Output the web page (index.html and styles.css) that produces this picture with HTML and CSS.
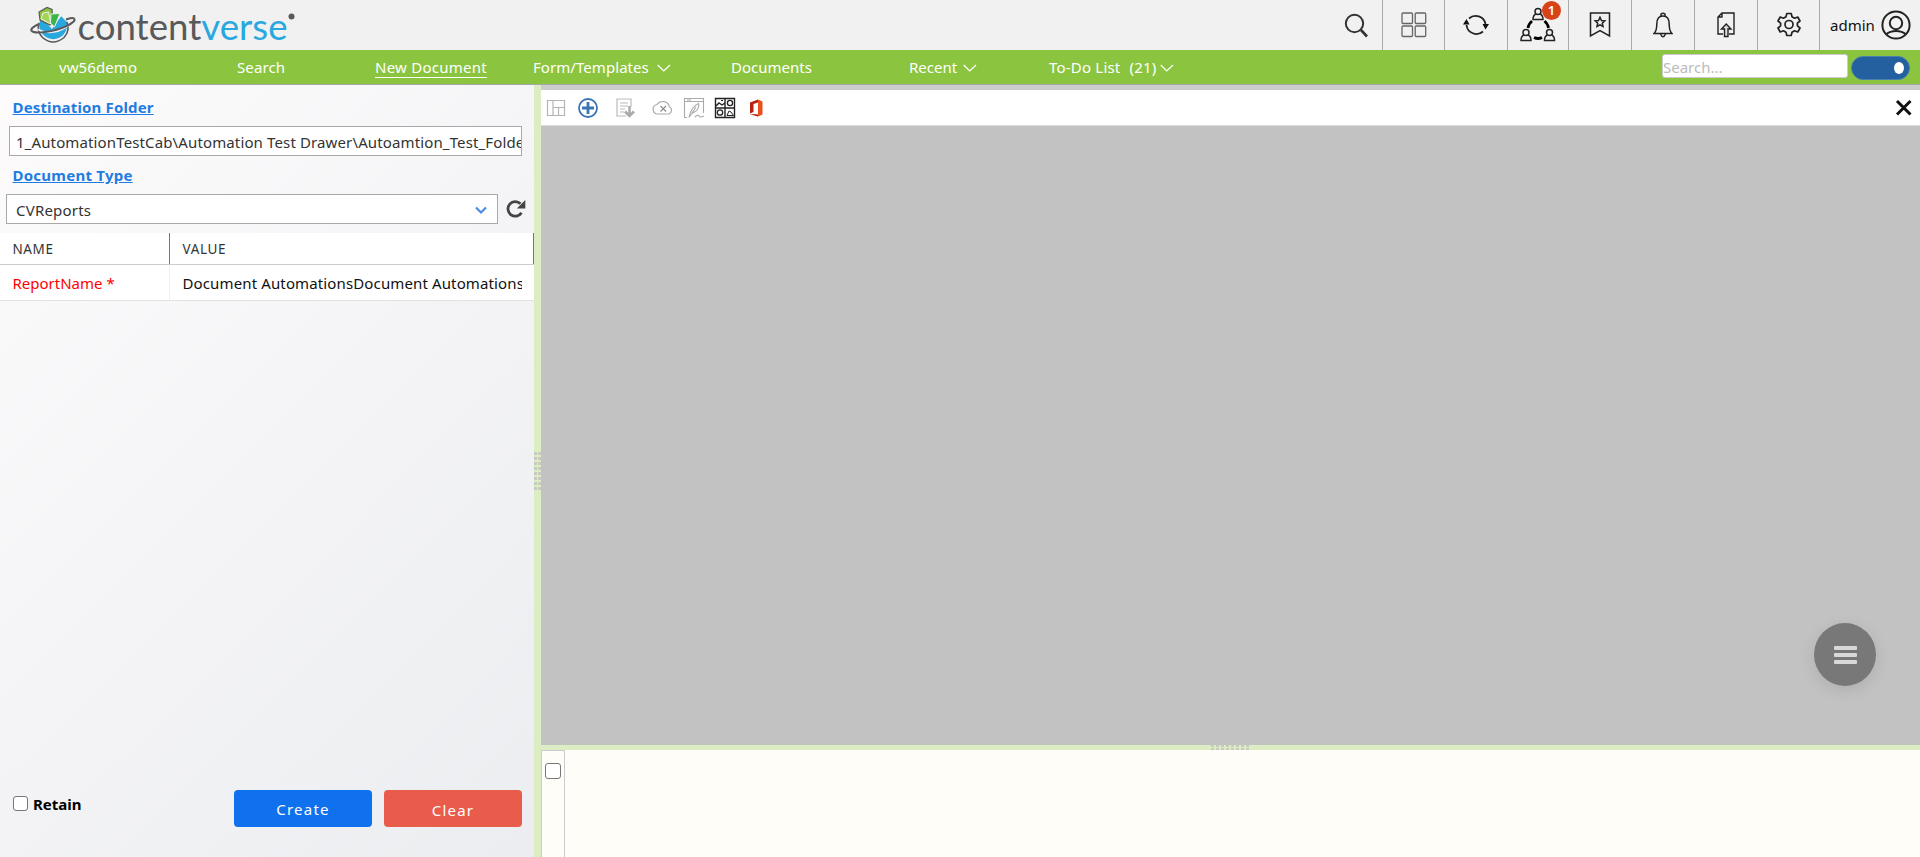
FILE: index.html
```html
<!DOCTYPE html>
<html lang="en">
<head>
<meta charset="utf-8">
<title>contentverse</title>
<link rel="stylesheet" href="styles.css">
</head>
<body>
<div class="app">
  <header class="header">
    <svg class="logo" width="320" height="50" viewBox="0 0 320 50">
      <path d="M39.500 22A14 14.500 0 1 0 67 22L60 15L45 14Z" fill="#29a8e0"/>
      <path d="M39 23A14.300 14.800 0 0 0 42.500 37.500Q53 46.500 64 37.500A15 15 0 0 0 67 22" fill="none" stroke="#58595b" stroke-width="1.600"/>
      <path d="M41 17L52 29L62 15L58 12L44 10Z" fill="#f1f1f1"/>
      <path d="M40 20L39 12L47 7.500L52 9.500L53 22L50 25Z" fill="#8cc63f" stroke="#58595b" stroke-width="1.200"/>
      <path d="M41 19L43 13L48.500 12L51 24Z" fill="#a5d45c" stroke="#f1f1f1"/>
      <path d="M51 14L60 13.500L54.500 27L50.500 23Z" fill="#39b54a" stroke="#f1f1f1"/>
      <path d="M38 29.500C48 35 60 32 69 25" fill="none" stroke="#f1f1f1" stroke-width="1.800"/>
      <path d="M39 24C27 29 29 34 45 32C61 30 78 22 74 18.500C72 17 68 19 66 19.500" fill="none" stroke="#58595b" stroke-width="2"/>
      <text class="word" x="77.500" y="39.500" textLength="210" lengthAdjust="spacingAndGlyphs"><tspan class="dark">content</tspan><tspan class="blue">verse</tspan></text>
      <circle cx="291.500" cy="16.500" r="3" fill="#58595b"/>
    </svg>
    <div class="tools">
      <div class="tool t-search"><svg width="26" height="28" viewBox="0 0 26 28" fill="none" stroke="#333" stroke-width="2"><circle cx="11.500" cy="11.500" r="8.700"/><path d="M18 18L24 24.500" stroke-width="2.600"/></svg></div>
      <div class="tool t-grid"><svg width="26" height="26" viewBox="0 0 26 26" fill="none" stroke="#666" stroke-width="1.300"><rect x="1" y="1" width="10.500" height="10.500" rx="1"/><rect x="14.200" y="1" width="10.500" height="10.500" rx="1"/><rect x="1" y="14" width="10.500" height="10.500" rx="1"/><rect x="14.200" y="14" width="10.500" height="10.500" rx="1"/></svg></div>
      <div class="tool t-sync"><svg width="26" height="24" viewBox="0 0 26 24" fill="none" stroke="#222" stroke-width="1.800"><path d="M6 5.500A10 10 0 0 1 22.500 11M20 18.500A10 10 0 0 1 3.500 12"/><path d="M0 11.500L3.500 6L6.500 11.500ZM19.500 11H26L22.500 16.500Z" fill="#111" stroke="none"/></svg></div>
      <div class="tool t-flow">
        <svg width="36" height="36" viewBox="0 0 36 36" fill="none" stroke="#222" stroke-width="1.500"><g id="p"><circle cx="18" cy="4.500" r="3"/><path d="M15.800 7C13.500 8 13 9.500 13 12.500H23C23 9.500 22.500 8 20.200 7"/></g><use href="#p" x="-12" y="21"/><use href="#p" x="11.500" y="21"/><path d="M12 14Q8.500 17 8 21M24.500 14Q28 17 28.500 21" stroke="#000" stroke-width="2.700"/><path d="M14 30.500Q18 32.500 22 30.500" stroke="#000" stroke-width="3"/></svg>
        <span class="badge">1</span>
      </div>
      <div class="tool t-mark"><svg width="22" height="26" viewBox="0 0 22 26" fill="none" stroke="#222" stroke-width="1.500"><path d="M1.500 1H20.500V24L11 18.500L1.500 24Z"/><path d="M11 5.200L12.500 8.500L15.800 8.900L13.300 11.200L14 14.500L11 12.800L8 14.500L8.700 11.200L6.200 8.900L9.500 8.500Z"/></svg></div>
      <div class="tool t-bell"><svg width="20" height="26" viewBox="0 0 20 26" fill="none" stroke="#222" stroke-width="1.500"><path d="M1 21.500Q3.800 19 3.800 12C3.800 6.500 6.500 4 10 4S16.200 6.500 16.200 12Q16.200 19 19 21.500ZM8 4V2Q10 .5 12 2V4M7.500 22Q10 27.500 12.500 22"/></svg></div>
      <div class="tool t-file"><svg width="18" height="26" viewBox="0 0 18 26" fill="none" stroke="#222" stroke-width="1.400"><path d="M6 22H1V5L5 1H17V22H12M5 1V5H1"/><path d="M7.500 24.500V17H4.500L9.200 12L14 17H11V24.500Z" fill="#ddd"/></svg></div>
      <div class="tool t-gear"><svg width="24" height="26" viewBox="0 0 24 26" fill="none" stroke="#222" stroke-width="1.700" stroke-linejoin="round"><circle cx="12" cy="12.500" r="4"/><path d="M9.800 1.500H14.200L15 4.800L17.500 6.200L20.800 5L23 9L20.400 11.200V13.800L23 16L20.800 20L17.500 18.800L15 20.200L14.200 23.500H9.800L9 20.200L6.500 18.800L3.200 20L1 16L3.600 13.800V11.200L1 9L3.200 5L6.500 6.200L9 4.800Z"/></svg></div>
      <div class="tool t-user"><span class="username">admin</span><svg width="30" height="30" viewBox="0 0 30 30" fill="none" stroke="#222" stroke-width="2"><circle cx="15" cy="15" r="13.600"/><circle cx="15" cy="13" r="6.200"/><path d="M5 24.500Q9 21 15 21T25 24.500"/></svg></div>
    </div>
  </header>

  <nav class="nav">
    <a class="nav-item n-room">vw56demo</a>
    <a class="nav-item n-search">Search</a>
    <a class="nav-item n-new"><span class="current">New Document</span></a>
    <a class="nav-item n-form">Form/Templates<svg class="chev" width="14" height="9" viewBox="0 0 14 9"><path d="M.7 1L6.800 7L13 1"/></svg></a>
    <a class="nav-item n-docs">Documents</a>
    <a class="nav-item n-recent">Recent<svg class="chev" width="14" height="9" viewBox="0 0 14 9"><path d="M.7 1L6.800 7L13 1"/></svg></a>
    <a class="nav-item n-todo"><span>To-Do List</span><span class="count">(21)</span><svg class="chev" width="14" height="9" viewBox="0 0 14 9"><path d="M.7 1L6.800 7L13 1"/></svg></a>
    <div class="nav-search">Search...</div>
    <div class="toggle"><span class="knob"></span></div>
  </nav>

  <main class="main">
    <section class="panel">
      <h2 class="label l-dest">Destination Folder</h2>
      <div class="folder"><span>1_AutomationTestCab\Automation Test Drawer\Autoamtion_Test_Folder</span></div>
      <h2 class="label l-type">Document Type</h2>
      <div class="type-row">
        <div class="select"><span>CVReports</span><svg width="12" height="9" viewBox="0 0 12 9" fill="none" stroke="#4e8be0" stroke-width="2.200"><path d="M1 1.500L6 6.500L11 1.500"/></svg></div>
        <svg class="reload" width="20" height="20" viewBox="0 0 20 20"><path d="M15.500 13.700A7.300 7.300 0 1 1 14.500 4.800" fill="none" stroke="#444" stroke-width="2.800"/><path d="M19.300 1V9.500H10.800Z" fill="#444"/></svg>
      </div>
      <div class="grid">
        <div class="row head"><div class="cell">NAME</div><div class="cell val">VALUE</div></div>
        <div class="row"><div class="cell required">ReportName *</div><div class="cell val"><span class="clip">Document AutomationsDocument Automations</span></div></div>
      </div>
      <div class="actions">
        <span class="box"></span><b class="retain">Retain</b>
        <button class="btn create">Create</button><button class="btn clear">Clear</button>
      </div>
    </section>

    <div class="split-v"><div class="dots-v"><i></i><i></i></div></div>

    <section class="viewer">
      <div class="toolbar">
        <svg width="240" height="34" viewBox="0 0 240 34" fill="none">
          <path d="M6.500 10.500H23.500V25.500H6.500ZM12 10.500V25.500M12 17.500H23.500M17.500 17.500V25.500" stroke="#b5b5b5" stroke-width="1.200"/>
          <circle cx="47" cy="18" r="9" stroke="#3a75b5" stroke-width="1.800"/><path d="M47 12V24M41 18H53" stroke="#3a75b5" stroke-width="2.800"/>
          <path d="M90 17V9H76V26H85M79 13H87M79 16H87M79 19H84M79 22H83" stroke="#bbb" stroke-width="1.200"/><path d="M88.500 16V26M84 21.500L88.500 26L93 21.500" stroke="#aaa" stroke-width="2.500"/>
          <path d="M117 24H128A4 4 0 0 0 128.500 16.800A7 7 0 0 0 116 14.500A4.800 4.800 0 0 0 117 24Z" stroke="#aaa" stroke-width="1.200"/><path d="M119.500 16L125 21.500M125 16L119.500 21.500" stroke="#888" stroke-width="1.100"/>
          <path d="M146 27.500H143.500V8.500H162.500V23M143.500 11.500H162.500M146 10H150" stroke="#aaa" stroke-width="1.100"/><path d="M148 27.500C149 22 152 16 157.500 13.500C159 17 156 22 150.500 23.500M148 27.500L155 17M154 27Q157 24 158 26T163 26" stroke="#aaa" stroke-width="1.100"/>
          <path d="M174.500 8.500H193.500V27.500H174.500ZM184 8.500V27.500M174.500 18H193.500M175 16L178 13L181 15L184 13" stroke="#222" stroke-width="1.400"/><circle cx="189" cy="13" r="2.600" stroke="#222" stroke-width="1.300"/><circle cx="179" cy="22.500" r="2.700" stroke="#222" stroke-width="1.300"/><path d="M186 25.500L188 21L190 22L192.500 25.500ZM180 10.500H182" stroke="#222"/>
          <path d="M217 9.500L221.500 11.500V24.500L217 26.500L209 24L217 25Z" fill="#e8501d"/><path d="M217 9.500L209 12.500V23.500L212.500 22V14L217 12.500Z" fill="#b82013"/><path d="M209 24L217 26.500V24.500Z" fill="#b82013"/>
        </svg>
        <svg class="close" width="18" height="18" viewBox="0 0 18 18"><path d="M2 2L15.500 15.500M15.500 2L2 15.500" stroke="#111" stroke-width="3"/></svg>
      </div>
      <div class="canvas"><div class="fab"><i></i><i></i><i></i></div></div>
      <div class="split-h"><div class="dots-h"><i></i><i></i></div></div>
      <div class="pages"><div class="gutter"><span class="box"></span></div></div>
    </section>
  </main>
</div>
</body>
</html>
```
FILE: styles.css
```css
* { box-sizing: border-box; }
body { margin: 0; font-family: "Noto Sans", "Open Sans", sans-serif; font-size: 15px; color: #333; overflow: hidden; }
.app { height: 857px; display: flex; flex-direction: column; }
.header { height: 50px; background: #f1f1f1; display: flex; justify-content: space-between; }
.logo { display: block; }
.word { font-family: Lato, sans-serif; font-size: 37.5px; }
.dark { fill: #58595b; }
.blue { fill: #29a8e0; }
.tools { display: flex; }
.tool { height: 50px; border-right: 1px solid #aaa; display: flex; align-items: center; justify-content: center; position: relative; }
.t-search { width: 55px; }
.t-search svg { margin: 2px 0 0 1px; }
.t-grid { width: 62px; }
.t-sync { width: 63px; }
.t-flow { width: 61px; }
.t-flow svg { margin: -1px 0 0 -1px; }
.t-mark, .t-bell, .t-file { width: 63px; }
.t-gear { width: 62px; }
.t-user { width: 100px; border-right: 0; justify-content: flex-start; padding-left: 10px; }
.t-user svg { margin-left: 6px; }
.username { width: 45px; font-size: 15px; color: #111; }
.badge { position: absolute; left: 34px; top: 1px; width: 19px; height: 19px; border-radius: 50%; background: #d84315; color: #fff; font-size: 13px; font-weight: 600; line-height: 18px; text-align: center; }

.nav { height: 35px; background: #8bc53f; border-bottom: 1px solid #a8a8a8; display: flex; color: #fff; padding-left: 59px; }
.nav-item { height: 34px; line-height: 34px; display: flex; white-space: pre; }
.n-room { width: 178px; letter-spacing: .1px; }
.n-search { width: 138px; letter-spacing: .1px; }
.n-new { width: 158px; letter-spacing: .25px; }
.current { height: 28px; border-bottom: 1px solid #fff; }
.n-form { width: 198px; letter-spacing: .06px; }
.n-docs { width: 178px; }
.n-recent { width: 140px; }
.n-todo { width: 613px; letter-spacing: .2px; }
.count { margin-left: 9px; }
.chev { margin: 14px 0 0 8px; fill: none; stroke: #fff; stroke-width: 1.2; }
.n-recent .chev { margin-left: 6px; }
.n-todo .chev { margin-left: 4px; }
.nav-search { width: 186px; height: 24px; margin-top: 4px; background: #fff; border: 1px solid #ccc; border-radius: 3px; color: #bbb; line-height: 25px; }
.toggle { width: 59px; height: 24px; margin: 6px 0 0 3px; background: #2460a0; border: 1px solid #4a80ad; border-radius: 12px; padding: 5px 0 0 42px; }
.knob { display: block; width: 10px; height: 12px; border-radius: 50%; background: #fff; }

.main { flex: 1; display: flex; min-height: 0; }
.panel { width: 534px; background: linear-gradient(135deg, #fdfbfc 0%, #ebedf0 100%); display: flex; flex-direction: column; }
.label { margin: 0; padding-left: 12.5px; font-size: 15px; line-height: 20px; font-weight: 700; color: #1e7de2; text-decoration: underline; letter-spacing: .15px; }
.l-dest { margin-top: 12px; }
.folder { width: 513px; height: 30px; margin: 9px 0 0 9px; padding-left: 6px; background: #fff; border: 1px solid #a9a9a9; line-height: 31px; white-space: nowrap; overflow: hidden; letter-spacing: .13px; }
.l-type { margin-top: 9px; letter-spacing: .25px; }
.type-row { display: flex; align-items: center; gap: 8px; margin: 9px 0 0 6px; }
.select { width: 492px; height: 30px; background: #fff; border: 1px solid #a9a9a9; display: flex; justify-content: space-between; align-items: center; padding: 2px 10px 0 9px; letter-spacing: .2px; }
.reload { margin-top: -1px; }
.grid { margin-top: 9px; }
.row { display: flex; height: 36px; background: #fff; border-bottom: 1px solid #e2e2e2; line-height: 36px; color: #111; }
.head { height: 32px; line-height: 33px; font-size: 13.5px; border-bottom-color: #ccc; color: #333; letter-spacing: .6px; }
.cell { width: 170px; padding-left: 12.5px; border-right: 1px solid #f0f0f0; }
.val { width: 364px; padding-right: 12px; border-right: 0; }
.head .cell { border-right: 1px solid #777; }
.required { color: #f00; }
.clip { display: block; overflow: hidden; white-space: nowrap; letter-spacing: .13px; }
.actions { margin-top: auto; height: 67px; display: flex; padding-left: 13px; }
.box { width: 15px; height: 15px; border: 1.5px solid #777; border-radius: 3px; background: #fff; }
.actions .box { margin: 6px 5px 0 0; }
.retain { width: 201px; margin-top: 4px; color: #000; }
.btn { width: 138px; height: 37px; border: 0; border-radius: 4px; color: #fff; font: 15px "Noto Sans", sans-serif; letter-spacing: 1.2px; padding: 1px 0 0; }
.create { background: #1071ee; margin-right: 12px; }
.clear { background: #e95b4b; padding-top: 2px; }

.split-v { width: 7px; background: #dcecc3; display: flex; align-items: center; }
.dots-v { width: 7px; height: 39px; display: flex; gap: 1px; }
.dots-v i { width: 3px; background: repeating-linear-gradient(180deg, #c6cabf 0 3px, transparent 3px 5px); }
.viewer { flex: 1; display: flex; flex-direction: column; }
.toolbar { height: 41px; border-top: 5px solid #ccc; border-bottom: 1px solid #ddd; background: #fff; display: flex; justify-content: space-between; }
.close { margin: 9px 7px 0 0; }
.canvas { height: 619px; background: #c2c2c2; display: flex; justify-content: flex-end; align-items: flex-end; padding: 0 44px 59px 0; }
.fab { width: 62px; height: 63px; border-radius: 50%; background: #787878; display: flex; flex-direction: column; gap: 3px; align-items: center; justify-content: center; box-shadow: 0 4px 16px rgba(0,0,0,.1); }
.fab i { width: 23px; height: 4px; border-radius: 1px; background: #d8d8d8; }
.split-h { height: 5px; background: #dcecc3; display: flex; justify-content: center; }
.dots-h { width: 39px; height: 5px; display: flex; flex-direction: column; gap: 1px; }
.dots-h i { height: 2px; background: repeating-linear-gradient(90deg, #c6cabf 0 3px, transparent 3px 5px); }
.pages { flex: 1; background: #fffdf8; display: flex; }
.gutter { width: 24px; border: 1px solid #ccc; border-bottom: 0; padding: 12px 0 0 3px; }
.gutter .box { display: block; width: 16px; height: 16px; }
```
